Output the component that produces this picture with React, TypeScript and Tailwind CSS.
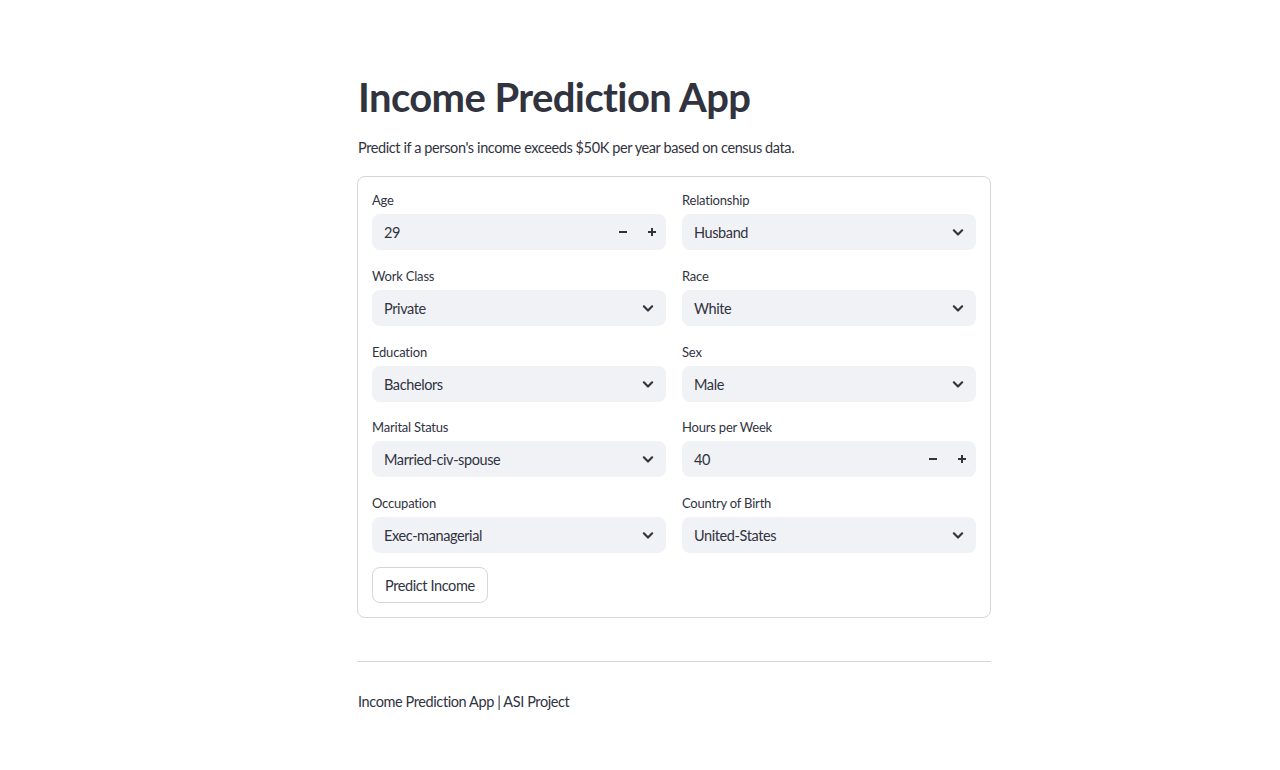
import React from 'react';

const font = { fontFamily: 'Lato, "Noto Sans", sans-serif' };

const Chevron = () => (
  <svg width="20" height="20" viewBox="0 0 24 24" fill="none" stroke="#31333F" strokeWidth="2.6" strokeLinecap="round" strokeLinejoin="round">
    <path d="M7 10l5 5 5-5" />
  </svg>
);

const Minus = () => (
  <svg width="10" height="10" viewBox="0 0 10 10"><rect x="1" y="4" width="8" height="2" fill="#31333F" /></svg>
);

const Plus = () => (
  <svg width="10" height="10" viewBox="0 0 10 10">
    <rect x="1" y="4" width="8" height="2" fill="#31333F" />
    <rect x="4" y="1" width="2" height="8" fill="#31333F" />
  </svg>
);

const Field: React.FC<{ label: string; value: string; number?: boolean }> = ({ label, value, number }) => (
  <div className="flex flex-col">
    <div className="h-[23px] text-[13px] leading-[18px] tracking-[-0.2px] text-[#31333F]">{label}</div>
    <div className="h-9 rounded-lg bg-[#f0f2f6] flex items-center pl-3 pr-[8px] text-[14.5px] tracking-[-0.4px] text-[#31333F]">
      <span className="flex-1 pt-[2px]">{value}</span>
      {number ? (
        <div className="flex items-center gap-[19px] pr-[1px]">
          <Minus />
          <Plus />
        </div>
      ) : (
        <Chevron />
      )}
    </div>
  </div>
);

export default function App() {
  const left = [
    { label: 'Age', value: '29', number: true },
    { label: 'Work Class', value: 'Private' },
    { label: 'Education', value: 'Bachelors' },
    { label: 'Marital Status', value: 'Married-civ-spouse' },
    { label: 'Occupation', value: 'Exec-managerial' },
  ];
  const right = [
    { label: 'Relationship', value: 'Husband' },
    { label: 'Race', value: 'White' },
    { label: 'Sex', value: 'Male' },
    { label: 'Hours per Week', value: '40', number: true },
    { label: 'Country of Birth', value: 'United-States' },
  ];
  const rows = left.map((l, i) => [l, right[i]]);

  return (
    <div className="min-h-screen bg-white text-[#31333F]" style={font}>
      <div className="ml-[357px] w-[634px] pt-[70px]">
        <h1 className="text-[40px] leading-[54px] font-bold pl-[1px] tracking-[-0.6px]">Income Prediction App</h1>
        <p className="mt-[12px] text-[14.5px] leading-[24px] pl-[1px] tracking-[-0.4px]">Predict if a person's income exceeds $50K per year based on census data.</p>
        <div className="mt-[16px] border border-[#d6d6d9] rounded-lg p-[14px]">
          <div className="grid grid-cols-2 gap-x-4 gap-y-[16.75px]">
            {rows.map(([a, b]) => (
              <React.Fragment key={a.label}>
                <Field {...a} />
                <Field {...b} />
              </React.Fragment>
            ))}
          </div>
          <button className="mt-[14px] h-9 px-3 pt-[1px] border border-[#d6d6d9] rounded-lg bg-white text-[14.5px] tracking-[-0.4px] text-[#31333F]">
            Predict Income
          </button>
        </div>
        <div className="mt-[43px] border-t border-[#d6d6d9]" />
        <p className="mt-[28px] text-[14.5px] leading-[24px] pl-[1px] tracking-[-0.4px]">Income Prediction App | ASI Project</p>
      </div>
    </div>
  );
}
